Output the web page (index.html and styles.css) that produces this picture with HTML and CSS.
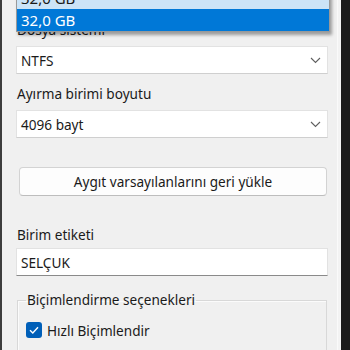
FILE: index.html
```html
<!DOCTYPE html>
<html lang="tr">
<head>
<meta charset="utf-8">
<link rel="stylesheet" href="styles.css">
</head>
<body>
<div class="screen">
  <div class="window">
    <div class="popup">
      <div class="opt opt-hover">32,0 GB</div>
      <div class="opt opt-sel">32,0 GB</div>
    </div>
    <div class="lbl lbl-first">Dosya sistemi</div>
    <div class="combo">
      <span>NTFS</span>
      <svg class="chev" width="11" height="7" viewBox="0 0 11 7"><path d="M1 1 L5.5 5.5 L10 1" fill="none" stroke="#5f5f5f" stroke-width="1.1"/></svg>
    </div>
    <div class="lbl lbl-gap">Ayırma birimi boyutu</div>
    <div class="combo">
      <span>4096 bayt</span>
      <svg class="chev" width="11" height="7" viewBox="0 0 11 7"><path d="M1 1 L5.5 5.5 L10 1" fill="none" stroke="#5f5f5f" stroke-width="1.1"/></svg>
    </div>
    <button class="btn">Aygıt varsayılanlarını geri yükle</button>
    <div class="lbl lbl-label">Birim etiketi</div>
    <div class="textbox">SELÇUK</div>
    <fieldset class="group">
      <legend>Biçimlendirme seçenekleri</legend>
      <div class="check">
        <span class="box"><svg width="16" height="16" viewBox="0 0 16 16"><path d="M4 8.2 L6.8 11 L12 5.3" fill="none" stroke="#fff" stroke-width="1.4"/></svg></span>
        <span>Hızlı Biçimlendir</span>
      </div>
    </fieldset>
  </div>
</div>
</body>
</html>
```

FILE: styles.css
```css
html, body {
  margin: 0;
  padding: 0;
}
body {
  background: #1b1b1b;
  font-family: "Noto Sans", "Open Sans", sans-serif;
  font-size: 13.6px;
  color: #1a1a1a;
}
.screen {
  width: 350px;
  height: 350px;
  overflow: hidden;
  display: flex;
}
.window {
  position: relative;
  box-sizing: border-box;
  width: 341px;
  height: 350px;
  flex-shrink: 0;
  background: #f0f0f0;
  border-left: 2px solid #3d3d3d;
  padding: 20px 14px 0 14px;
  display: flex;
  flex-direction: column;
  box-shadow: inset -3px 0 0 #f3f3f3, inset -4px 0 0 #fafafa;
}
.window > * {
  flex-shrink: 0;
}
.popup {
  position: absolute;
  left: 14px;
  top: -14px;
  width: 312px;
  background: #fff;
  border: 1px solid #9a9a9a;
  box-shadow: 2px 3px 3px rgba(0,0,0,0.35);
  z-index: 2;
}
.opt {
  height: 22px;
  line-height: 22px;
  padding-left: 4px;
  font-size: 15px;
}
.opt-hover {
  background: #cce4f7;
  color: #1a1a1a;
}
.opt-sel {
  background: #0078d7;
  color: #fff;
}
.lbl {
  height: 20px;
  line-height: 20px;
  padding-left: 1px;
  margin-bottom: 6px;
}
.lbl-gap {
  margin-top: 10px;
}
.lbl-label {
  margin-top: 29px;
  margin-bottom: 3px;
}
.combo, .textbox {
  box-sizing: border-box;
  height: 28px;
  background: #fff;
  border: 1px solid #e2e2e2;
  border-bottom-color: #cfcfcf;
  display: flex;
  align-items: center;
  justify-content: space-between;
  padding: 0 6px 0 4px;
  width: 312px;
}
.textbox {
  border-bottom: 1px solid #8a8a8a;
}
.chev {
  display: block;
}
.btn {
  margin-top: 29px;
  margin-left: 3px;
  box-sizing: border-box;
  width: 308px;
  height: 29px;
  background: #fdfdfd;
  border: 1px solid #d3d3d3;
  border-bottom-color: #bdbdbd;
  border-radius: 4px;
  font-family: inherit;
  font-size: 13.6px;
  color: #1a1a1a;
  padding: 0;
}
.group {
  margin: 15px 0 0 1px;
  padding: 12px 0 20px 8px;
  width: 310px;
  box-sizing: border-box;
  border: 1px solid #d8d8d8;
  box-shadow: inset 1px 1px 0 #fbfbfb;
  min-width: 0;
}
.group legend {
  padding: 0 1px;
  margin-left: 0;
  line-height: 18px;
}
.check {
  display: flex;
  align-items: center;
  gap: 5px;
  height: 18px;
}
.box {
  width: 16px;
  height: 16px;
  border-radius: 3px;
  background: #005fb8;
  display: block;
}
.box svg {
  display: block;
}
```
